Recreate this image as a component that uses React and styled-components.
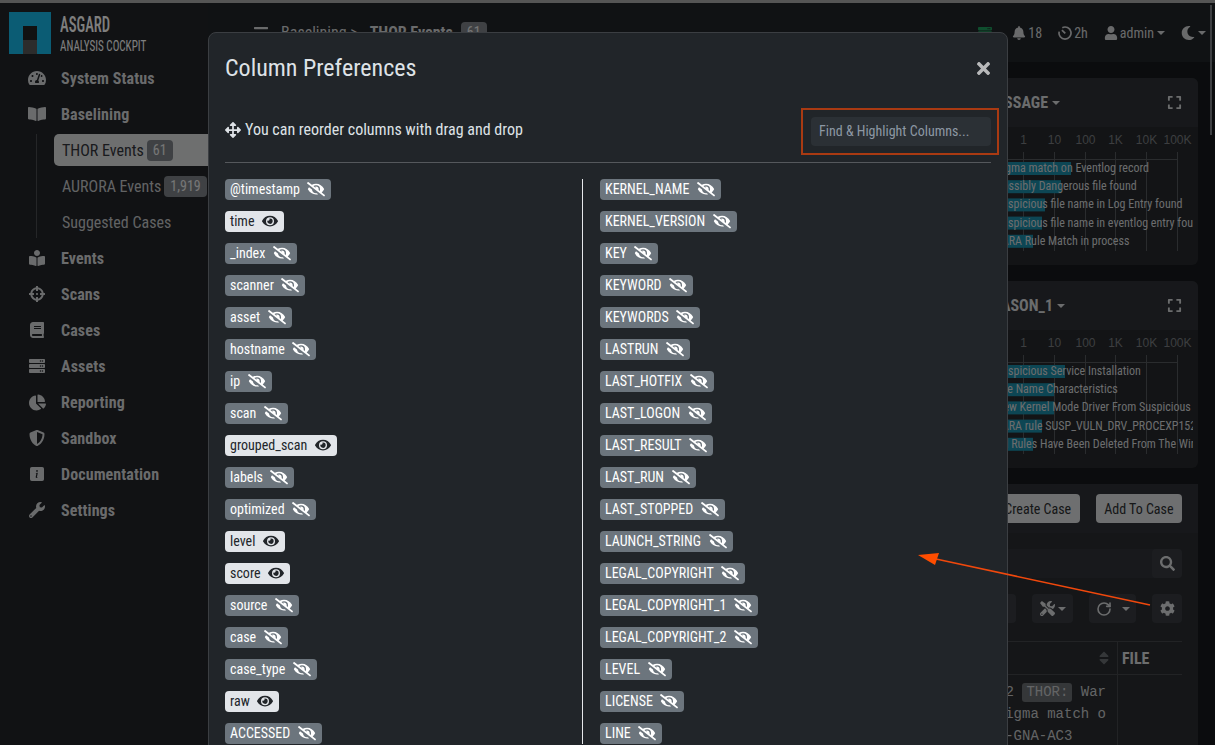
import React from 'react';
import styled, { createGlobalStyle } from 'styled-components';
import {
	FaTachometerAlt, FaBookOpen, FaBookReader, FaCrosshairs, FaBook, FaServer, FaChartPie,
	FaShieldAlt, FaWrench, FaArrowsAlt, FaEye, FaEyeSlash, FaTimes, FaBell, FaUser, FaMoon,
	FaSearch, FaTools, FaCog, FaSort, FaExpand, FaBars,
} from 'react-icons/fa';
import { BsInfoSquareFill } from 'react-icons/bs';
import { RotateCw } from 'lucide-react';

const GlobalStyle = createGlobalStyle`
	html, body { margin: 0; height: 100%; overflow: hidden; background: #16181c; }
	* { box-sizing: border-box; }
	body, input, button {
		font-family: "Roboto Condensed", Roboto, "Liberation Sans", sans-serif;
		font-stretch: 75%;
	}
`;

const Page = styled.div`
	width: 1215px;
	height: 745px;
	overflow: hidden;
	position: relative;
	display: flex;
	flex-direction: column;
`;
const TopStrip = styled.div`
	height: 3px;
	flex: none;
	background: #555;
`;
const Shell = styled.div`
	flex: 1;
	display: grid;
	grid-template-columns: 208px 1fr;
	min-height: 0;
`;

const Sidebar = styled.aside`
	background: #222428;
	padding: 9px 0 0 0;
`;
const Brand = styled.div`
	display: flex;
	gap: 9px;
	height: 48px;
	padding-left: 9px;
`;
const BrandText = styled.div`
	color: #fff;
	display: flex;
	flex-direction: column;
	align-items: flex-start;
	text-transform: uppercase;
`;
const BrandName = styled.span`
	font-size: 22px;
	line-height: 26px;
	font-weight: 500;
	transform: scaleX(0.67);
	transform-origin: left;
`;
const BrandSub = styled.span`
	font-size: 15px;
	line-height: 16px;
	transform: scaleX(0.74);
	transform-origin: left;
	white-space: nowrap;
`;
const Nav = styled.nav`
	display: flex;
	flex-direction: column;
`;
const NavItem = styled.div`
	height: 36px;
	display: flex;
	align-items: center;
	color: #d4d6d8;
	font-size: 16px;
	font-weight: 700;
	letter-spacing: 0.1px;
`;
const NavIcon = styled.span`
	width: 18px;
	margin: 0 15px 0 28px;
	display: flex;
	align-items: center;
	justify-content: center;
	font-size: ${(p) => p.$size || 16}px;
`;
const SubNav = styled.div`
	margin: 2px 0 2px 36px;
	padding-left: 17px;
	border-left: 1px solid #4a4d50;
	display: flex;
	flex-direction: column;
	gap: 4px;
	height: 104px;
`;
const SubItem = styled.div`
	height: 32px;
	flex: none;
	display: flex;
	align-items: center;
	gap: 3px;
	padding-left: 8px;
	font-size: 16px;
	white-space: nowrap;
	border-radius: 5px 0 0 5px;
	color: ${(p) => (p.$active ? '#33353a' : '#c4c6c8')};
	background: ${(p) => (p.$active ? '#dcdedf' : 'transparent')};
`;
const Count = styled.span`
	height: 21px;
	padding: 0 6px;
	border-radius: 4px;
	background: #7e8388;
	color: #eceded;
	font-size: 14px;
	line-height: 21px;
`;

const Main = styled.main`
	min-width: 0;
	display: flex;
	flex-direction: column;
`;
const TopBar = styled.header`
	height: 59px;
	flex: none;
	background: #212428;
	display: flex;
	align-items: center;
	padding: 0 9px 0 45px;
	font-size: 16px;
	color: #d2d4d6;
`;
const Crumbs = styled.div`
	display: flex;
	align-items: center;
	gap: 8px;
	margin-left: 12px;
	flex: 1;
`;
const CrumbCurrent = styled.b`
	font-weight: 700;
	margin-left: 4px;
`;
const TopItem = styled.span`
	display: flex;
	align-items: center;
	gap: 2px;
	font-size: 14px;
	margin-left: ${(p) => p.$gap || 16}px;
	color: ${(p) => p.$color || 'inherit'};
	svg {
		font-size: 14px;
	}
`;
// bootstrap style dropdown caret
const Caret = styled.i`
	display: inline-block;
	width: 0;
	height: 0;
	margin-left: 1px;
	border-top: 4.5px solid currentColor;
	border-left: 4.5px solid transparent;
	border-right: 4.5px solid transparent;
`;

const Content = styled.div`
	padding: 16px 17px 0 24px;
	display: flex;
	flex-direction: column;
	gap: 16px;
`;
const ChartPanel = styled.section`
	height: 187px;
	border-radius: 6px;
	overflow: hidden;
	background: #26292d;
	display: flex;
	flex-direction: column;
`;
const PanelHead = styled.div`
	height: 49px;
	flex: none;
	background: #2e3136;
	display: flex;
	align-items: center;
	justify-content: flex-end;
	padding-right: 16px;
	color: #d6d8da;
`;
const PanelTitle = styled.div`
	display: flex;
	align-items: center;
	gap: 3px;
	font-size: 16px;
	font-weight: 700;
	margin-right: ${(p) => p.$right}px;
`;
const ChartBody = styled.div`
	display: flex;
	justify-content: flex-end;
`;
const ExpandIcon = styled(FaExpand)`
	font-size: 15px;
`;

const ListPanel = styled.section`
	border-radius: 6px 6px 0 0;
	background: #2a2d31;
	flex: 1;
	height: 300px;
`;
const ListHead = styled.div`
	height: 49px;
	background: #2e3136;
	padding: 10px 16px 0 0;
	display: flex;
	justify-content: flex-end;
	gap: 16px;
`;
const CaseButton = styled.button`
	height: 29px;
	padding: 0 8.5px;
	border: 0;
	border-radius: 4px;
	background: #dcdee0;
	color: #2c2e31;
	font-size: 14px;
`;
const ListBody = styled.div`
	padding: 16px 16px 0;
	display: flex;
	flex-direction: column;
`;
const SearchRow = styled.div`
	height: 29px;
	display: flex;
	justify-content: flex-end;
	background: #303338;
	border-radius: 4px;
`;
const ToolRow = styled.div`
	margin-top: 16px;
	display: flex;
	justify-content: flex-end;
	gap: 16px;
`;
const ToolButton = styled.div`
	height: 29px;
	width: ${(p) => p.$w}px;
	background: #383b40;
	border-radius: 4px;
	color: #d8dadc;
	font-size: 15px;
	display: flex;
	align-items: center;
	justify-content: center;
	gap: ${(p) => p.$gap || 2}px;
`;
const EventTable = styled.div`
	margin-top: 18px;
	display: grid;
	grid-template-columns: 1fr 65px;
	border-top: 1px solid #44474b;
`;
const HeadCell = styled.div`
	height: 33px;
	display: flex;
	align-items: center;
	justify-content: flex-end;
	padding: 0 5px;
	border-bottom: 1px solid #44474b;
	font-size: 16px;
	font-weight: 700;
	color: ${(p) => (p.$muted ? '#6b6e72' : '#d8dadc')};
	& + & {
		border-left: 1px solid #44474b;
		justify-content: flex-start;
		padding: 0 4px;
	}
`;
const MessageCell = styled.div`
	padding: 6px 11px 0 0;
	font-family: "Liberation Mono", monospace;
	font-stretch: normal;
	font-size: 14px;
	line-height: 22px;
	white-space: pre;
	text-align: right;
	color: #c6c8ca;
`;
const FileCell = styled.div`
	border-left: 1px solid #44474b;
`;
const LogTag = styled.span`
	display: inline-block;
	padding: 0 4px;
	line-height: 19px;
	border-radius: 3px;
	background: #6b6e72;
	color: #c6c8ca;
`;

const Backdrop = styled.div`
	position: absolute;
	inset: 3px 0 0 0;
	background: rgba(0, 0, 0, 0.5);
`;
const ScrollThumb = styled.div`
	position: absolute;
	top: 5px;
	right: 3px;
	width: 2px;
	height: 130px;
	background: #3d3f42;
`;
const Modal = styled.div`
	position: absolute;
	left: 208px;
	top: 32px;
	width: 800px;
	height: 760px;
	background: #212529;
	border: 1px solid #3b3e42;
	border-radius: 8px;
	padding: 16px;
	color: #dee2e6;
`;
const ModalHeader = styled.div`
	height: 38px;
	display: flex;
	align-items: center;
	justify-content: space-between;
`;
const ModalTitle = styled.h5`
	margin: 0;
	font-size: 24px;
	font-weight: 400;
`;
const CloseIcon = styled(FaTimes)`
	font-size: 19px;
	color: #b8b9ba;
	margin-right: -2px;
`;
const ModalIntro = styled.div`
	margin-top: 24px;
	height: 52px;
	display: flex;
	align-items: flex-start;
	justify-content: space-between;
	border-bottom: 1px solid #55585c;
	padding-top: 6px;
	font-size: 16px;
`;
const Hint = styled.div`
	display: flex;
	align-items: center;
	gap: 4px;
	height: 25px;
`;
const FindInput = styled.input`
	width: 180px;
	height: 29px;
	border: 0;
	border-radius: 4px;
	background: #2b3035;
	padding: 0 8px 2px;
	color: #dee2e6;
	font-size: 14px;
	&::placeholder {
		color: #8d98a4;
		opacity: 1;
	}
`;
const Columns = styled.div`
	margin-top: 16px;
	display: grid;
	grid-template-columns: 357px 1fr;
`;
const ChipColumn = styled.div`
	display: flex;
	flex-direction: column;
	align-items: flex-start;
	gap: 11px;
	& + & {
		border-left: 1px solid #e6e8ea;
		padding-left: 17px;
	}
`;
const Chip = styled.span`
	height: 21px;
	display: inline-flex;
	align-items: center;
	gap: 7.5px;
	padding: 0 6px 2px 5px;
	border-radius: 4px;
	font-size: 14px;
	background: ${(p) => (p.$on ? '#e2e5e9' : '#6c757d')};
	color: ${(p) => (p.$on ? '#212529' : '#fff')};
`;
const EyeOn = styled(FaEye)`
	width: 16px;
	height: 14.4px;
	margin-top: 2px;
`;
const EyeOff = styled(FaEyeSlash)`
	width: 18px;
	height: 14.4px;
	margin-top: 2px;
`;

const Callout = styled.div`
	position: absolute;
	left: 801px;
	top: 108px;
	width: 198px;
	height: 47px;
	border: 2px solid #a93a12;
`;
const ArrowLayer = styled.svg`
	position: absolute;
	left: 900px;
	top: 540px;
`;

const leftCols = [
	['@timestamp'], ['time', 1], ['_index'], ['scanner'], ['asset'], ['hostname'], ['ip'], ['scan'],
	['grouped_scan', 1], ['labels'], ['optimized'], ['level', 1], ['score', 1], ['source'], ['case'],
	['case_type'], ['raw', 1], ['ACCESSED'],
];
const rightCols = [
	'KERNEL_NAME', 'KERNEL_VERSION', 'KEY', 'KEYWORD', 'KEYWORDS', 'LASTRUN', 'LAST_HOTFIX', 'LAST_LOGON',
	'LAST_RESULT', 'LAST_RUN', 'LAST_STOPPED', 'LAUNCH_STRING', 'LEGAL_COPYRIGHT', 'LEGAL_COPYRIGHT_1',
	'LEGAL_COPYRIGHT_2', 'LEVEL', 'LICENSE', 'LINE',
];
const ticks = [['1', 245.5], ['10', 276.5], ['100', 307.5], ['1K', 337.5], ['10K', 368.5], ['100K', 399.5]];
const messageRows = [
	['Sigma match on Eventlog record', 293],
	['Possibly Dangerous file found', 283],
	['Suspicious file name in Log Entry found', 267],
	['Suspicious file name in eventlog entry found', 264],
	['YARA Rule Match in process', 255],
];
const reasonRows = [
	['Suspicious Service Installation', 287],
	['File Name Characteristics', 276],
	['New Kernel Mode Driver From Suspicious Location', 276],
	['YARA rule SUSP_VULN_DRV_PROCEXP152 May 2023', 264],
	['All Rules Have Been Deleted From The Windows Firewall', 255],
];

const TimerIcon = () => (
	<svg width="14" height="14" viewBox="0 0 14 14" fill="none" stroke="currentColor" strokeWidth="1.7">
		<path d="M4.3 1.7A6 6 0 1 1 1.2 5.6" />
		<path d="M3.9 4.1 7.3 7.4" />
	</svg>
);

const LogChart = ({ rows, id }) => (
	<svg width="420" height="138">
		<clipPath id={id}>
			<rect x="0" y="0" width="415" height="138" />
		</clipPath>
		{ticks.map(([label, x]) => (
			<g key={label}>
				<line x1={x} x2={x} y1="25" y2="124" stroke="#55585c" />
				<text x={x} y="17" fill="#7a7d80" fontSize="12" textAnchor="middle" fontFamily="Liberation Sans">
					{label}
				</text>
			</g>
		))}
		<line x1="190" x2="399" y1="32.5" y2="32.5" stroke="#55585c" />
		<g clipPath={`url(#${id})`}>
			{rows.map(([label, end], i) => (
				<g key={label}>
					<rect x="190" y={35 + i * 18.2} width={end - 190} height="13" fill="#1a8ca8" />
					<text x="218" y={45 + i * 18.2} fill="#d8dadc" fontSize="12">{label}</text>
				</g>
			))}
		</g>
	</svg>
);

export default function App() {
	return (
		<Page>
			<GlobalStyle />
			<TopStrip />
			<Shell>
				<Sidebar>
					<Brand>
						<svg width="42" height="42" viewBox="0 0 42 42">
							<rect width="42" height="42" fill="#16b8e8" />
							<rect x="14" y="14" width="14" height="14" fill="#222" />
							<rect x="14" y="28" width="14" height="14" fill="#585858" />
						</svg>
						<BrandText>
							<BrandName>Asgard</BrandName>
							<BrandSub>Analysis Cockpit</BrandSub>
						</BrandText>
					</Brand>
					<Nav>
						<NavItem><NavIcon $size={18}><FaTachometerAlt /></NavIcon>System Status</NavItem>
						<NavItem><NavIcon $size={18}><FaBookOpen /></NavIcon>Baselining</NavItem>
						<SubNav>
							<SubItem $active>THOR Events <Count>61</Count></SubItem>
							<SubItem>AURORA Events <Count>1,919</Count></SubItem>
							<SubItem>Suggested Cases</SubItem>
						</SubNav>
						<NavItem><NavIcon><FaBookReader /></NavIcon>Events</NavItem>
						<NavItem><NavIcon><FaCrosshairs /></NavIcon>Scans</NavItem>
						<NavItem><NavIcon><FaBook /></NavIcon>Cases</NavItem>
						<NavItem><NavIcon><FaServer /></NavIcon>Assets</NavItem>
						<NavItem><NavIcon $size={17}><FaChartPie /></NavIcon>Reporting</NavItem>
						<NavItem><NavIcon><FaShieldAlt /></NavIcon>Sandbox</NavItem>
						<NavItem><NavIcon $size={14}><BsInfoSquareFill /></NavIcon>Documentation</NavItem>
						<NavItem><NavIcon><FaWrench /></NavIcon>Settings</NavItem>
					</Nav>
				</Sidebar>
				<Main>
					<TopBar>
						<FaBars />
						<Crumbs>
							Baselining &gt; <CrumbCurrent>THOR Events</CrumbCurrent> <Count>61</Count>
						</Crumbs>
						<TopItem $color="#1f9d5c"><FaServer /></TopItem>
						<TopItem $gap={20}><FaBell />18</TopItem>
						<TopItem><TimerIcon />2h</TopItem>
						<TopItem><FaUser />admin<Caret /></TopItem>
						<TopItem><FaMoon /><Caret /></TopItem>
					</TopBar>
					<Content>
						<ChartPanel>
							<PanelHead>
								<PanelTitle $right={107}>MATCH_MESSAGE <Caret /></PanelTitle>
								<ExpandIcon />
							</PanelHead>
							<ChartBody><LogChart id="msg" rows={messageRows} /></ChartBody>
						</ChartPanel>
						<ChartPanel>
							<PanelHead>
								<PanelTitle $right={102}>REASON_1 <Caret /></PanelTitle>
								<ExpandIcon />
							</PanelHead>
							<ChartBody><LogChart id="reason" rows={reasonRows} /></ChartBody>
						</ChartPanel>
						<ListPanel>
							<ListHead>
								<CaseButton>Create Case</CaseButton>
								<CaseButton>Add To Case</CaseButton>
							</ListHead>
							<ListBody>
								<SearchRow>
									<ToolButton $w={30}><FaSearch /></ToolButton>
								</SearchRow>
								<ToolRow>
									<ToolButton $w={60} />
									<ToolButton $w={41}><FaTools /><Caret /></ToolButton>
									<ToolButton $w={47} $gap={9}><RotateCw size={16} strokeWidth={2.4} /><Caret /></ToolButton>
									<ToolButton $w={30}><FaCog /></ToolButton>
								</ToolRow>
								<EventTable>
									<HeadCell $muted><FaSort /></HeadCell>
									<HeadCell>FILE</HeadCell>
									<MessageCell>
										{'2 '}<LogTag>THOR:</LogTag>{' War\nSigma match o\nMS-GNA-AC3    '}
									</MessageCell>
									<FileCell />
								</EventTable>
							</ListBody>
						</ListPanel>
					</Content>
				</Main>
			</Shell>
			<Backdrop />
			<ScrollThumb />
			<Modal>
				<ModalHeader>
					<ModalTitle>Column Preferences</ModalTitle>
					<CloseIcon />
				</ModalHeader>
				<ModalIntro>
					<Hint><FaArrowsAlt /> You can reorder columns with drag and drop</Hint>
					<FindInput placeholder="Find & Highlight Columns..." />
				</ModalIntro>
				<Columns>
					<ChipColumn>
						{leftCols.map(([name, on]) => (
							<Chip key={name} $on={on}>{name}{on ? <EyeOn /> : <EyeOff />}</Chip>
						))}
					</ChipColumn>
					<ChipColumn>
						{rightCols.map((name) => (
							<Chip key={name}>{name}<EyeOff /></Chip>
						))}
					</ChipColumn>
				</Columns>
			</Modal>
			<Callout />
			<ArrowLayer width="260" height="80">
				<line x1="250" y1="65" x2="36" y2="19" stroke="#f0480c" strokeWidth="1.5" />
				<polygon points="18,15 39,13 35,25" fill="#ff4d00" />
			</ArrowLayer>
		</Page>
	);
}
